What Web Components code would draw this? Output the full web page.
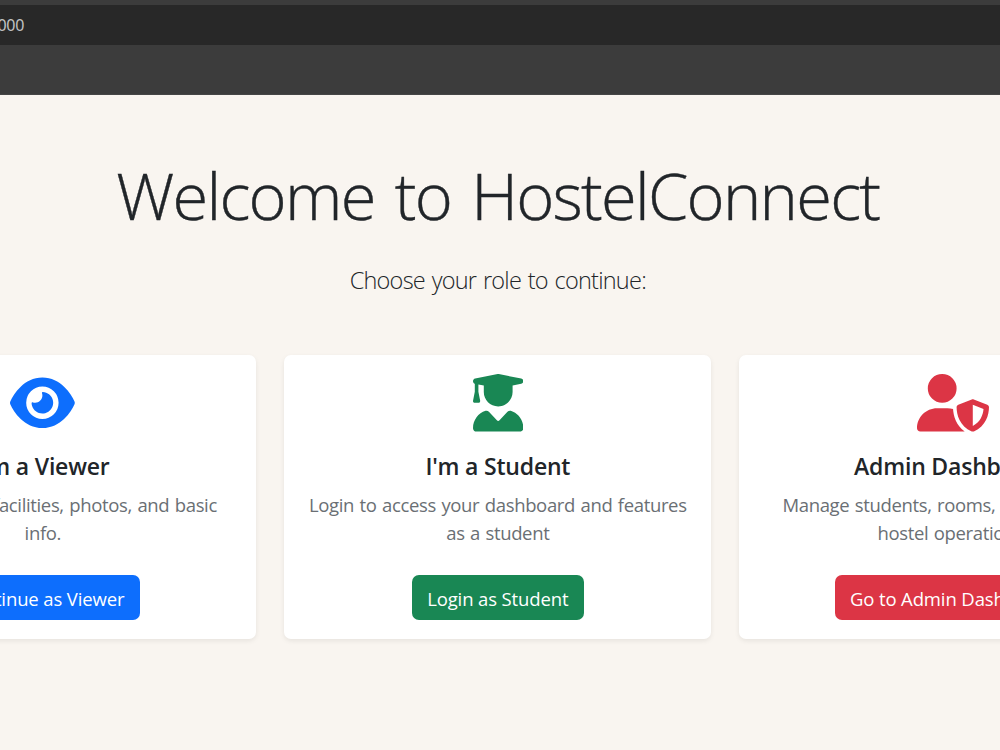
<!DOCTYPE html>
<html lang="en">
<head>
<meta charset="UTF-8">
<title>HostelConnect</title>
<style>
    html, body { margin: 0; height: 100%; overflow: hidden; }
    body { background: #f9f5f0; font-family: "Open Sans", "Noto Sans", sans-serif; color: #212529; }
</style>
</head>
<body>
<browser-bar>localhost:5000</browser-bar>
<role-page>
    <span slot="title">Welcome to HostelConnect</span>
    <span slot="lead">Choose your role to continue:</span>
    <role-card icon="eye" color="#0d6efd">
        <span slot="title">I'm a Viewer</span>
        Explore hostel facilities, photos, and basic<br>info.
        <span slot="action">Continue as Viewer</span>
    </role-card>
    <role-card icon="graduate" color="#198754">
        <span slot="title">I'm a Student</span>
        Login to access your dashboard and features<br>as a student
        <span slot="action">Login as Student</span>
    </role-card>
    <role-card icon="shield" color="#dc3545">
        <span slot="title">Admin Dashboard</span>
        Manage students, rooms, &nbsp;and supervise<br>hostel operations.
        <span slot="action">Go to Admin Dashboard</span>
    </role-card>
</role-page>

<script>
// [viewBox width, path], all icons are 512 high
const ICONS = {
    eye: [576, 'M288 32c-80.8 0-145.5 36.8-192.6 80.6C48.6 156 17.3 208 2.5 243.7c-3.3 7.9-3.3 16.7 0 24.6C17.3 304 48.6 356 95.4 399.4C142.5 443.2 207.2 480 288 480s145.5-36.8 192.6-80.6c46.8-43.5 78.1-95.4 93-131.1c3.3-7.9 3.3-16.7 0-24.6c-14.9-35.7-46.2-87.7-93-131.1C433.5 68.8 368.8 32 288 32zM144 256a144 144 0 1 1 288 0 144 144 0 1 1 -288 0zm144-64c0 35.3-28.7 64-64 64c-7.1 0-13.9-1.2-20.3-3.3c-5.5-1.8-11.9 1.6-11.7 7.4c.3 6.9 1.3 13.8 3.2 20.7c13.7 51.2 66.4 81.6 117.6 67.9s81.6-66.4 67.9-117.6c-11.1-41.5-47.8-69.4-88.6-71.1c-5.8-.2-9.2 6.1-7.4 11.7c2.1 6.4 3.3 13.2 3.3 20.3z'],
    graduate: [448, 'M219.3 .5c3.1-.6 6.3-.6 9.4 0l200 40C439.9 42.7 448 52.6 448 64s-8.1 21.3-19.3 23.5L352 102.9l0 57.1c0 70.7-57.3 128-128 128s-128-57.3-128-128l0-57.1L48 93.3l0 65.1 15.7 78.4c.9 4.7-.3 9.6-3.3 13.3s-7.6 5.9-12.4 5.9l-32 0c-4.8 0-9.3-2.1-12.4-5.9s-4.3-8.6-3.3-13.3L16 158.4l0-71.8C6.5 83.3 0 74.3 0 64C0 52.6 8.1 42.7 19.3 40.5l200-40zM111.9 327.7c10.5-3.4 21.8 .4 29.4 8.5l71 75.5c6.3 6.7 17 6.7 23.3 0l71-75.5c7.6-8.1 18.9-11.9 29.4-8.5C401 348.6 448 409.4 448 481.3c0 17-13.8 30.7-30.7 30.7L30.7 512C13.8 512 0 498.2 0 481.3c0-71.9 47-132.7 111.9-153.6z'],
    shield: [640, 'M224 256A128 128 0 1 0 224 0a128 128 0 1 0 0 256zm-45.7 48C79.8 304 0 383.8 0 482.3C0 498.7 13.3 512 29.7 512l388.6 0c1.8 0 3.5-.2 5.3-.5c-76.3-55.1-99.8-141-103.1-200.2c-16.1-4.8-33.1-7.3-50.7-7.3l-91.4 0zm308.8-78.3l-120 48C358 277.4 352 286.2 352 296c0 63.3 25.9 168.8 134.8 214.2c5.9 2.5 12.6 2.5 18.5 0C614.1 464.8 640 359.3 640 296c0-9.8-6-18.6-15.1-22.3l-120-48c-5.7-2.3-12.1-2.3-17.8 0zM591.4 312c-3.9 50.7-27.2 116.7-95.4 149.7l0-187.8L591.4 312z']
};

class BrowserBar extends HTMLElement {
    constructor() {
        super();
        this.attachShadow({ mode: 'open' });
    }

    connectedCallback() {
        this.shadowRoot.innerHTML = `
        <style>
            :host { display: block; box-sizing: border-box; height: 95px; padding-top: 5px; background: #3c3c3c; border-bottom: 1px solid #464646; overflow: hidden; }
            .address { display: flex; align-items: center; height: 40px; background: #282828; color: #c2c2c2; font: 16px/40px "Noto Sans", sans-serif; }
            .url { display: flex; justify-content: flex-end; width: 24px; letter-spacing: -0.3px; }
        </style>
        <div class="address"><div class="url"><slot></slot></div></div>
        `;
    }
}

class RolePage extends HTMLElement {
    constructor() {
        super();
        this.attachShadow({ mode: 'open' });
    }

    connectedCallback() {
        this.shadowRoot.innerHTML = `
        <style>
            :host { display: flex; flex-direction: column; width: 1337px; margin-left: -170.7px; padding-top: 55px; text-align: center; }
            h1 { margin: 0; font-weight: 300; font-size: 65px; line-height: 90px; letter-spacing: -1.75px; word-spacing: 5px; white-space: nowrap; -webkit-text-stroke: 0.4px; }
            p { margin: 22px 0 0; font-weight: 300; font-size: 23.5px; line-height: 36px; letter-spacing: -0.75px; word-spacing: 1.3px; }
            .cards { display: grid; grid-template-columns: repeat(3, 1fr); gap: 28px; margin-top: 57px; }
        </style>
        <h1><slot name="title"></slot></h1>
        <p><slot name="lead"></slot></p>
        <div class="cards"><slot></slot></div>
        `;
    }
}

class RoleCard extends HTMLElement {
    constructor() {
        super();
        this.attachShadow({ mode: 'open' });
    }

    connectedCallback() {
        const [width, path] = ICONS[this.getAttribute('icon')];
        const color = this.getAttribute('color');
        this.shadowRoot.innerHTML = `
        <style>
            :host { display: flex; flex-direction: column; align-items: center; box-sizing: border-box; height: 284px; padding-top: 19px; background: #fff; border-radius: 7px; box-shadow: 0 2px 5px rgba(0, 0, 0, .075); }
            svg { display: block; height: 57.6px; fill: ${color}; }
            h5 { margin: 20.4px 0 0; font-weight: 600; font-size: 23px; line-height: 29px; letter-spacing: -0.2px; }
            .text { margin-top: 9.6px; color: #6a6f74; font-size: 18.5px; line-height: 28.6px; letter-spacing: -0.35px; word-spacing: 1px; white-space: nowrap; }
            button { box-sizing: border-box; margin: 27.2px 0 0; height: 45px; padding: 2px 15px 0; border: 0; border-radius: 7px; background: ${color}; color: #fff; font: 18.5px "Open Sans", sans-serif; letter-spacing: -0.12px; white-space: nowrap; }
        </style>
        <svg viewBox="0 0 ${width} 512"><path d="${path}"/></svg>
        <h5><slot name="title"></slot></h5>
        <div class="text"><slot></slot></div>
        <button><slot name="action"></slot></button>
        `;
    }
}

customElements.define('browser-bar', BrowserBar);
customElements.define('role-page', RolePage);
customElements.define('role-card', RoleCard);
</script>
</body>
</html>
